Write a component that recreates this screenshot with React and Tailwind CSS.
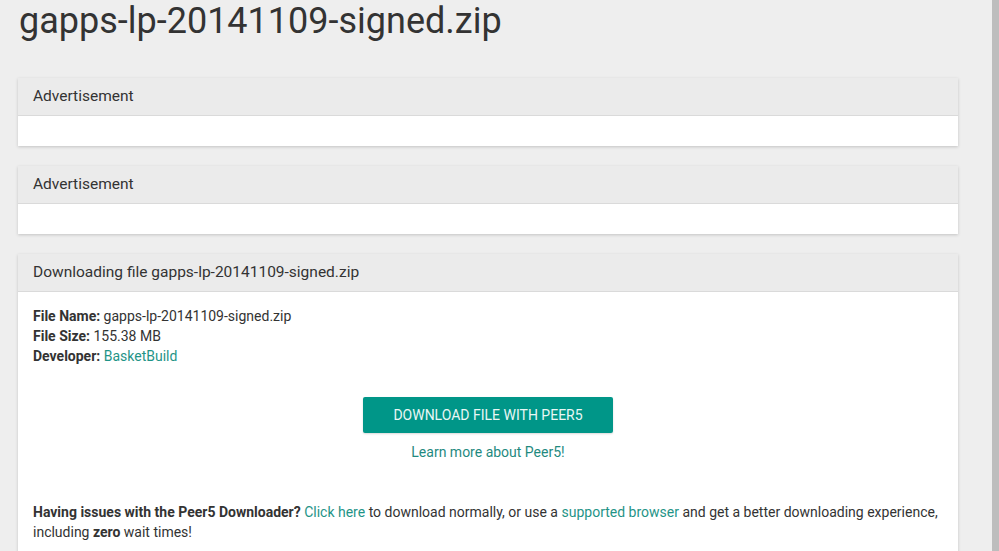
import React from 'react';

const Card = ({ title, children }) => (
    <div className="w-[940px] bg-white shadow-[0_1px_3px_rgba(0,0,0,0.18)] mb-5">
        <div className="h-[38px] bg-[#ebebeb] border-b border-[#dadada] px-[15px] flex items-center text-[15.5px] text-[#333]">
            {title}
        </div>
        {children}
    </div>
);

const App = () => {
    return (
        <div className="h-[551px] w-[999px] overflow-hidden flex bg-[#eeeeee] font-['Roboto',sans-serif]">
            <div className="flex-1 pl-[18px]">
                <h1 className="text-[36px] leading-[42px] text-[#333] pl-px mb-[36px]">gapps-lp-20141109-signed.zip</h1>

                <Card title="Advertisement">
                    <div className="h-[30px]"></div>
                </Card>

                <Card title="Advertisement">
                    <div className="h-[30px]"></div>
                </Card>

                <Card title="Downloading file gapps-lp-20141109-signed.zip">
                    <div className="px-[15px] pt-[14px] pb-6 text-[14px] leading-[20px] text-[#333]">
                        <div><b>File Name:</b> gapps-lp-20141109-signed.zip</div>
                        <div><b>File Size:</b> 155.38 MB</div>
                        <div><b>Developer:</b> <a className="text-[#1f9487]">BasketBuild</a></div>

                        <div className="flex flex-col items-center mt-[31px]">
                            <button className="w-[250px] h-[36px] bg-[#009688] text-[#e9f7f5] text-[14px] rounded-[2px] shadow-[0_1px_2px_rgba(0,0,0,0.15)]">
                                DOWNLOAD FILE WITH PEER5
                            </button>
                            <a className="mt-[9px] text-[#1f8a7f]">Learn more about Peer5!</a>
                        </div>

                        <p className="mt-[40px]">
                            <b>Having issues with the Peer5 Downloader?</b>{' '}
                            <a className="text-[#1f9487]">Click here</a> to download normally, or use a{' '}
                            <a className="text-[#1f9487]">supported browser</a> and get a better downloading experience, including <b>zero</b> wait times!
                        </p>
                    </div>
                </Card>
            </div>
            <div className="w-[7px] bg-[#bdbdbd]"></div>
        </div>
    );
};

export default App;
